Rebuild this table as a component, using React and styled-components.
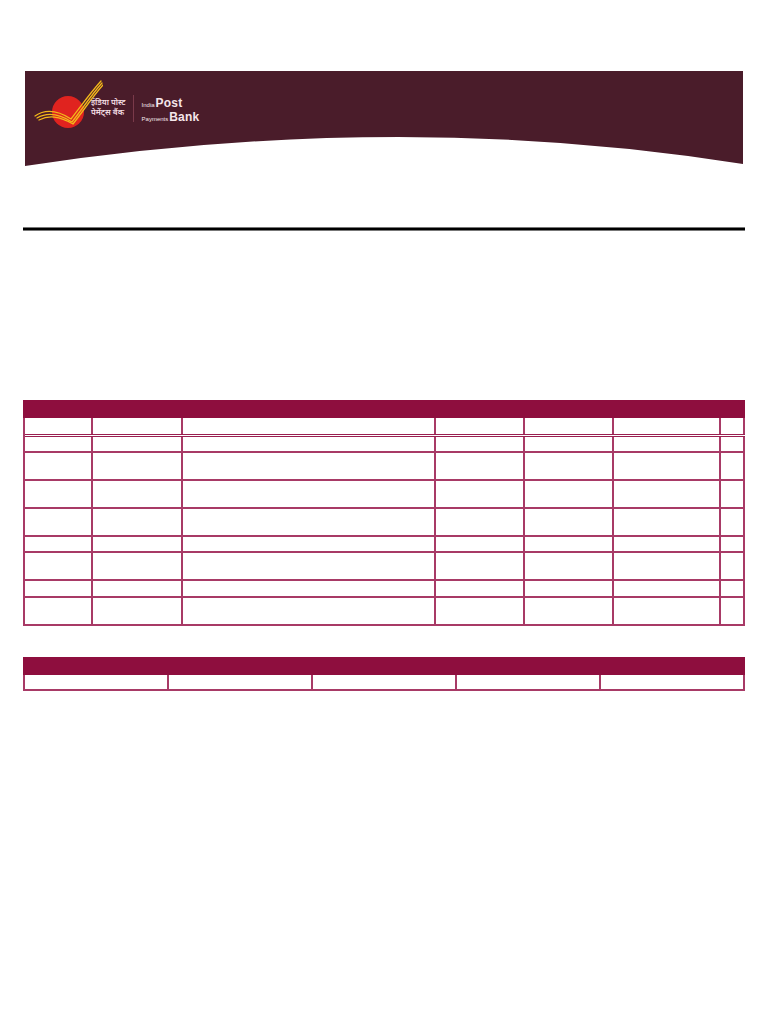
import React from 'react';
import styled, { createGlobalStyle } from 'styled-components';

const GlobalStyle = createGlobalStyle`
  html, body {
    margin: 0;
    padding: 0;
    background: #ffffff;
    font-family: "Liberation Sans", Arial, sans-serif;
  }
  * { box-sizing: border-box; }
`;

const Page = styled.div`
  width: 768px;
  min-height: 1024px;
  padding-top: 71px;
`;

const Frame = styled.div`
  width: 722px;
  margin-left: 23px;
`;

const Banner = styled.header`
  width: 718px;
  height: 95px;
  margin: 0 2px;
  background: #4a1c2a;
  clip-path: path('M0 0 H718 V93 Q375 38 0 95 Z');
  display: flex;
  align-items: flex-start;
  padding: 7px 0 0 6px;
`;

const Mark = styled.svg`
  width: 72px;
  height: 52px;
  flex: none;
`;

const HindiName = styled.div`
  margin: 20px 0 0 -12px;
  color: #f3dde2;
  font-family: "Noto Sans Devanagari", "Noto Sans", "Liberation Sans", sans-serif;
  font-size: 8px;
  line-height: 10px;
  font-weight: 600;
  white-space: nowrap;
`;

const Divider = styled.div`
  width: 1px;
  height: 27px;
  margin: 17px 8px 0 7px;
  background: #7a3a4a;
`;

const EnglishName = styled.div`
  margin-top: 19px;
  color: #f5e6ea;
  white-space: nowrap;
`;

const NameLine = styled.div`
  display: flex;
  align-items: baseline;
  line-height: 12px;
`;

const Small = styled.span`
  font-size: 6px;
  margin-right: 1px;
`;

const Big = styled.span`
  font-size: 12px;
  font-weight: 700;
  letter-spacing: 0.2px;
`;

const Rule = styled.div`
  margin-top: 61px;
  height: 4px;
  background: #000;
  border-top: 1px solid #777;
  border-bottom: 1px solid #777;
`;

const Table = styled.section`
  margin-top: ${p => p.$gap}px;
  border-left: 2px solid #a83a66;
`;

const TitleBar = styled.div`
  height: 18px;
  margin-left: -2px;
  background: #8e0e3e;
`;

const Row = styled.div`
  display: grid;
  grid-template-columns: ${p => p.$cols};
  height: ${p => p.$h}px;
  border-bottom: ${p => (p.$double ? '3px double #9a1f50' : '2px solid #a83a66')};
`;

const Cell = styled.div`
  border-right: 2px solid #a83a66;
`;

const cols1 = '68px 90px 253px 89px 89px 107px 24px';
const rows1 = [19, 16, 28, 28, 28, 16, 28, 17, 28];
const cols2 = 'repeat(5, 1fr)';

export default function App() {
  return (
    <>
      <GlobalStyle />
      <Page>
        <Frame>
          <Banner>
            <Mark viewBox="0 0 72 52">
              <circle cx="37" cy="34" r="16" fill="#e0231f" />
              <g fill="none" stroke="#f2b81a" strokeWidth="1.3" strokeLinecap="round">
                <path d="M4 38 C14 31, 26 32, 40 41 C50 28, 60 14, 70 3" />
                <path d="M6 40 C16 34, 27 35, 41 44 C52 30, 61 16, 71 5" />
                <path d="M8 42 C18 37, 28 38, 42 46 C53 32, 62 18, 72 7" />
              </g>
            </Mark>
            <HindiName>
              <div>इंडिया पोस्ट</div>
              <div>पेमेंट्स बैंक</div>
            </HindiName>
            <Divider />
            <EnglishName>
              <NameLine><Small>India</Small><Big>Post</Big></NameLine>
              <NameLine><Small>Payments</Small><Big>Bank</Big></NameLine>
            </EnglishName>
          </Banner>

          <Rule />

          <Table $gap={169}>
            <TitleBar />
            {rows1.map((h, i) => (
              <Row key={i} $cols={cols1} $h={h} $double={i === 0}>
                {Array.from({ length: 7 }).map((_, j) => <Cell key={j} />)}
              </Row>
            ))}
          </Table>

          <Table $gap={31}>
            <TitleBar />
            <Row $cols={cols2} $h={16}>
              {Array.from({ length: 5 }).map((_, j) => <Cell key={j} />)}
            </Row>
          </Table>
        </Frame>
      </Page>
    </>
  );
}
